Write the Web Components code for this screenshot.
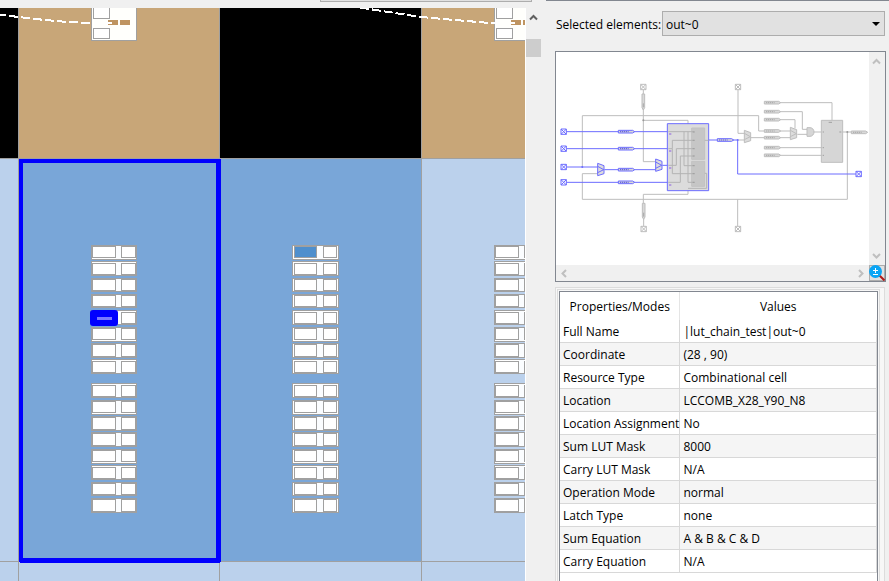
<!DOCTYPE html>
<html lang="en">
<head>
<meta charset="utf-8">
<title>Chip Planner</title>
<style>
  body { margin: 0; font: 12px/18px "Open Sans", "Noto Sans", sans-serif; color: #000; background: #f0f0f0; }
</style>
</head>
<body>
<chip-planner>
  <floor-plan slot="map"></floor-plan>
  <element-picker slot="side" label="Selected elements:" value="out~0"></element-picker>
  <schematic-view slot="side"></schematic-view>
  <property-table slot="side"></property-table>
</chip-planner>

<script>
const define = (name, html, setup) => customElements.define(name, class extends HTMLElement {
  constructor() {
    super();
    this.attachShadow({ mode: "open" });
  }
  connectedCallback() {
    const t = document.createElement("template");
    t.innerHTML = html;
    this.shadowRoot.replaceChildren(t.content.cloneNode(true));
    if (setup) setup.call(this, this.shadowRoot);
  }
});

define("chip-planner", `
<style>
  :host { display: grid; grid-template-columns: minmax(0, 541fr) minmax(0, 348fr); height: 100vh; overflow: hidden; }
  main { display: flex; flex-direction: column; min-width: 0; min-height: 0; }
  .bar { height: 8px; flex: none; display: flex; justify-content: flex-end; padding-right: 9px; }
  .bar div { width: 210px; height: 1px; border: 1px solid #adadad; border-top: 0; background: #e1e1e1; }
  aside { display: flex; flex-direction: column; min-width: 0; min-height: 0; padding: 0 3px 0 14px; }
  .rule { height: 1px; flex: none; background: #828790; margin: 0 -3px 10px -9px; }
</style>
<main><div class="bar"><div></div></div><slot name="map"></slot></main>
<aside><div class="rule"></div><slot name="side"></slot></aside>`);

/* Scroll bar: direction="v" or "h"; optional thumb; "open" leaves out the end arrow; colour through --arrow. */
define("scroll-bar", `
<style>
  :host { display: flex; justify-content: space-between; background: #f0f0f0; color: var(--arrow, #bfbfbf); }
  :host([direction="v"]) { flex-direction: column; width: 15px; }
  :host([direction="h"]) { height: 16px; align-items: center; }
  svg { width: 15px; height: 17px; fill: none; stroke: currentColor; stroke-width: 2; display: block; flex: none; }
  :host([direction="h"]) svg { width: 17px; height: 15px; }
  .thumb { height: 18px; background: #cdcdcd; margin: 14px 0 auto; display: none; }
  :host([thumb]) .thumb { display: block; }
  :host([open]) .b { display: none; }
</style>
<svg class="a"><path/></svg><div class="thumb"></div><svg class="b"><path/></svg>`, function (root) {
  const v = this.getAttribute("direction") === "v";
  root.querySelector(".a path").setAttribute("d", v ? "M4 11.500L7.500 8L11 11.500" : "M10 4L6.500 7.500L10 11");
  root.querySelector(".b path").setAttribute("d", v ? "M4 6L7.500 9.500L11 6" : "M7 4L10.500 7.500L7 11");
});

define("floor-plan", `
<style>
  :host { display: flex; flex: 1; min-height: 0; }
  .canvas { flex: 1; min-width: 0; background: #bbd1ec; overflow: hidden; border-right: 1px solid #fff; }
  svg { width: 100%; height: 100%; display: block; }
  scroll-bar { --arrow: #606060; }
</style>
<div class="canvas"><svg role="img" aria-label="Device floorplan" shape-rendering="crispEdges"></svg></div>
<scroll-bar direction="v" thumb open></scroll-bar>`, function (root) {
  const G = "#a0a0a0";
  const r = (x, y, w, h, f) => `<rect x="${x}" y="${y}" width="${w}" height="${h}" fill="${f}"/>`;
  let s = r(0, 8, 18, 150, "#000") + r(18, 8, 202, 150, "#c8a678") + r(220, 8, 201, 150, "#000") + r(421, 8, 800, 150, "#c8a678");
  s += r(19, 159, 402, 402, "#79a6d8");
  s += r(0, 158, 1200, 1, G) + r(0, 561, 1200, 1, G);
  for (const x of [18, 219, 421]) s += r(x, 8, 1, 1200, G);
  for (const o of [0, 403]) {
    s += r(91 + o, 0, 46, 41, G) + r(92 + o, 0, 44, 40, "#fffffc");
    s += r(93 + o, 0, 17, 19, G) + r(94 + o, 0, 15, 18, "#fff");
    s += r(93 + o, 28, 17, 11, G) + r(94 + o, 29, 15, 9, "#fff");
    s += r(108 + o, 20, 10, 5, "#bf9461") + r(120 + o, 20, 10, 5, "#bf9461") + r(107 + o, 22, 5, 2, "#fff");
  }
  const dash = `fill="none" stroke="#fff" stroke-width="2" stroke-dasharray="9 3"`;
  s += `<path ${dash} stroke-dashoffset="3" d="M0 14.500L18 17L45 20L68 22L92 23"/>`;
  s += `<path ${dash} d="M360 7.500L385 11.500L421 17L455 20L490 23L498 23"/>`;
  /* Each row: top, height, and the side (t / b) on which the outer frame shows a gap. */
  const rows = [[245, 15, "b"], [261, 15, "t"], [278, 14, ""], [294, 14, ""], [310, 15, "t"], [327, 15, "b"], [343, 15, ""], [359, 15, "t"],
    [383, 15, "t"], [400, 15, "b"], [416, 15, ""], [432, 15, ""], [449, 15, "b"], [465, 15, "t"], [482, 14, ""], [498, 15, ""]];
  /* Each column: outer x, outer width, left box x/w, strip x/w, right box x/w. */
  const cols = [[91, 46, 93, 22, 116, 5, 122, 13], [292, 47, 295, 21, 317, 6, 324, 12], [494, 46, 496, 22, 519, 5, 525, 13]];
  cols.forEach(([x, w, lx, lw, sx, sw, rx, rw], c) => {
    rows.forEach(([y, h, gap], i) => {
      const by = gap === "t" ? y + 3 : y + 2, bh = gap ? h - 5 : h - 4;
      s += r(x, y, w, h, G);
      if (c === 1) s += r(x + 1, y + 1, 1, h - 2, "#fff") + r(x + w - 2, y + 1, 1, h - 2, "#fff");
      if (gap === "t") s += r(x + 1, y + 1, w - 2, 1, "#fff");
      if (gap === "b") s += r(x + 1, y + h - 2, w - 2, 1, "#fff");
      s += r(sx, y + 1, sw, h - 2, "#fbfdff");
      s += r(lx, by, lw, bh, c === 1 && i === 0 ? "#4f8fcd" : "#fff") + r(rx, by, rw, bh, "#fff");
    });
  });
  s += r(19, 159, 202, 4, "#00f") + r(19, 159, 4, 403, "#00f") + r(216, 160, 5, 402, "#00f") + r(20, 558, 200, 5, "#00f");
  s += `<rect x="90" y="310" width="28" height="16" rx="3" fill="#00f" shape-rendering="auto"/>` + r(97, 317, 15, 3, "#7a7aff");
  root.querySelector("svg").innerHTML = `<g transform="translate(0 -8)">${s}</g>`;
});

define("element-picker", `
<style>
  :host { display: flex; align-items: center; gap: 6px; padding: 0 1px; margin-bottom: 15px; }
  label { flex: none; width: 100px; white-space: nowrap; padding-top: 3px; }
  .box { flex: 1; min-width: 0; display: grid; align-items: center; }
  .box > * { grid-area: 1 / 1; }
  select { appearance: none; font: inherit; color: inherit; width: 100%; height: 25px; padding: 3px 20px 0 3px; margin: 0; background: #e1e1e1; border: 1px solid #adadad; border-radius: 0; }
  svg { width: 8px; height: 4px; justify-self: end; margin-right: 5px; pointer-events: none; }
</style>
<label for="sel"></label>
<div class="box"><select id="sel"></select><svg viewBox="0 0 8 4"><path d="M0 0H8L4 4Z"/></svg></div>`, function (root) {
  root.querySelector("label").textContent = this.getAttribute("label");
  root.querySelector("select").add(new Option(this.getAttribute("value")));
});

define("schematic-view", `
<style>
  :host { display: grid; grid-template-columns: minmax(0, 1fr) 16px; border: 1px solid #828790; background: #fff; margin-bottom: 5px; flex: none; }
  .drawing { width: 100%; display: block; }
  scroll-bar[direction="v"] { width: 16px; }
  button { padding: 0; border: 1px solid #adadad; background: #e1e1e1; width: 16px; height: 16px; display: block; }
  button svg { display: block; width: 16px; height: 16px; margin: -1px; }
</style>
<svg class="drawing" viewBox="3 -69 939 639" role="img" aria-label="Cell schematic" fill="none" stroke-width="3"></svg>
<scroll-bar direction="v"></scroll-bar>
<scroll-bar direction="h"></scroll-bar>
<button aria-label="Zoom"><svg viewBox="0 0 16 16"><path d="M10 10l5.500 5.500" stroke="#b01818" stroke-width="2"/><circle cx="6.500" cy="6.500" r="6.500" fill="#0aa5f5"/><path d="M4 5.500h5M6.500 3v5M4 9.500h5" stroke="#fff" stroke-width="1" fill="none"/></svg></button>`, function (root) {
  const B = "#6c6cff", G = "#bdbdbd";
  const path = (d, c, f = "none") => `<path d="${d}" stroke="${c}" fill="${f}"/>`;
  const pin = (x, y, c) => path(`M${x - 8} ${y - 8}h16v16h-16zM${x - 8} ${y - 8}l16 16M${x + 8} ${y - 8}l-16 16`, c, "#fff");
  /* Buffer symbol: a pointed bar with a row of tiny marks on it. */
  const buf = (x, y, c) => path(`M${x} ${y - 4}h43l6 4l-6 4h-43z`, c, "#d9d9d9") +
    `<path d="M${x + 5} ${y}h26" stroke="${c === B ? "#5555d8" : "#a8a8a8"}" stroke-dasharray="4 2"/>`;
  const vbuf = (x, y) => path(`M${x - 4} ${y}h8v41l-4 7l-4-7z`, G, "#d9d9d9") + path(`M${x} ${y + 28}v12`, "#a8a8a8");
  const mux = (x, y, c) => path(`M${x} ${y}l19 7v24l-19 6z`, c, "#dcdcdc") + path(`M${x} ${y + 9}l18 10l-18 9`, c);
  let s = "";
  s += path("M265 44V260H302M265 136H399V170M82 276V122H611V168H627M128 296H82V373H877V172M265 385V358H399V340H455V295", G);
  s += path("M549 44V175H568M568 195H549M548 373V453M266 432V453", G);
  s += path("M675 83H831V138M675 110H742V163H756M675 134H720V160M675 168H706M586 188H627M675 188H706M675 218H805M675 241H805M727 178H756M777 171H799M863 171H890", G);
  s += path("M337 146H461V347H337Z", B, "#dcdcdc");
  s += path("M410 159H449V253H410ZM410 259H449V334H410Z", "#c2c2c2", "#c6c6c6");
  s += path("M340 170H418M340 221H352V196H418M340 271H364V221H418M340 322H376V243H418M387 170V272H418M352 221V296H418M399 170V322H418M449 196H461M449 295H455V340H399", "#b4b4b4");
  s += `<path d="M342 177h7M342 228h7M342 279h7M342 330h7" stroke="#8c5ce0" stroke-width="3"/>`;
  s += `<path d="M413 171h6M413 196h6M413 221h6M413 243h6M413 272h6M413 296h6M413 322h6" stroke="#9e9e9e"/>`;
  s += path("M34 170H337M34 221H337M34 276H128M148 284H302M322 271H337M34 322H337M461 195H548V297H903", B);
  s += pin(26, 170, B) + pin(26, 221, B) + pin(26, 276, B) + pin(26, 322, B) + pin(911, 297, B);
  s += pin(265, 36, G) + pin(266, 462, G) + pin(549, 36, G) + pin(549, 462, G);
  s += vbuf(265, 57) + vbuf(266, 385);
  for (const y of [170, 221, 284, 322]) s += buf(190, y, B);
  s += buf(487, 195, B);
  for (const y of [83, 110, 134, 168, 188, 218, 241]) s += buf(628, y, G);
  s += buf(889, 172, G);
  s += mux(128, 265, B) + mux(302, 252, B) + mux(568, 166, G) + mux(706, 157, G);
  s += path("M756 158h9a12 13 0 0 1 0 26h-9z", G, "#d6d6d6");
  s += path("M799 136h64v126h-64z", G, "#d6d6d6") + path("M821 142h10M803 171h4M803 218h4M803 241h4M853 171h6", "#a0a0a0");
  s += `<g fill="#999"><circle cx="265" cy="136" r="3"/><circle cx="877" cy="171" r="3"/></g><g fill="${B}"><circle cx="82" cy="276" r="3"/><circle cx="548" cy="195" r="3"/></g>`;
  root.querySelector(".drawing").innerHTML = s;
});

const properties = [
  ["Full Name", "|lut_chain_test|out~0"], ["Coordinate", "(28 , 90)"], ["Resource Type", "Combinational cell"],
  ["Location", "LCCOMB_X28_Y90_N8"], ["Location Assignment", "No"], ["Sum LUT Mask", "8000"], ["Carry LUT Mask", "N/A"],
  ["Operation Mode", "normal"], ["Latch Type", "none"], ["Sum Equation", "A & B & C & D"], ["Carry Equation", "N/A"]
];

define("property-table", `
<style>
  :host { display: flex; flex: 1; min-height: 0; overflow: hidden; border: 1px solid #dcdcdc; border-bottom: 0; padding: 1px 4px 0 1px; margin-right: 1px; background: #f7f7f7; }
  .mid { display: flex; flex: 1; min-width: 0; border: 1px solid #dcdcdc; border-bottom: 0; padding: 1px 1px 0; }
  .frame { flex: 1; min-width: 0; background: #fff; border: 1px solid #828790; border-bottom: 0; }
  table { width: 100%; border-collapse: separate; border-spacing: 0; table-layout: fixed; }
  th, td { padding: 2px 3px 0; text-align: left; font-weight: 400; white-space: nowrap; line-height: 20px; height: 20px; border-bottom: 1px solid #d8d8d8; border-right: 1px solid #d8d8d8; }
  thead th { text-align: center; height: 26px; border-bottom: 0; border-color: #e5e5e5; }
  thead th:last-child { border-right-color: transparent; }
  tbody tr:nth-child(even) > * { background: #f5f5f5; }
  col:first-child { width: 38%; }
</style>
<div class="mid"><div class="frame"><table>
  <colgroup><col><col></colgroup>
  <thead><tr><th scope="col">Properties/Modes</th><th scope="col">Values</th></tr></thead>
  <tbody></tbody>
</table></div></div>`, function (root) {
  const body = root.querySelector("tbody");
  for (const [name, value] of properties) {
    const tr = body.insertRow();
    const th = document.createElement("th");
    th.scope = "row";
    th.textContent = name;
    tr.append(th);
    tr.insertCell().textContent = value;
  }
});
</script>
</body>
</html>
